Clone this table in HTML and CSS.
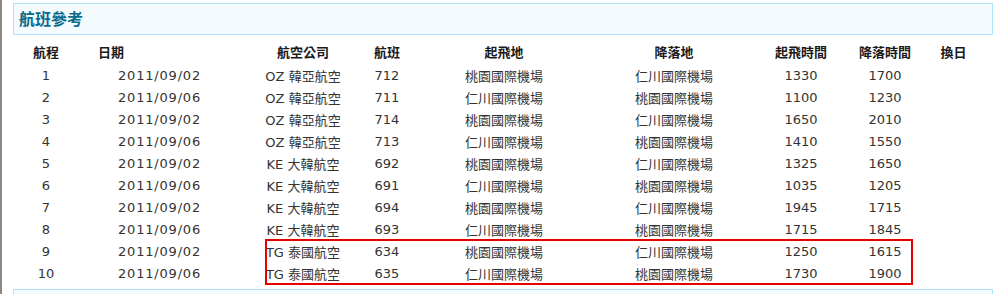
FILE: index.html
```html
<!DOCTYPE html>
<html lang="zh-Hant">
<head>
<meta charset="utf-8">
<title>航班參考</title>
<link rel="stylesheet" href="styles.css">
</head>
<body>
<div class="frame">
  <div class="panel-head">航班參考</div>
  <div class="table-wrap">
    <table class="flights">
      <colgroup>
        <col class="c1"><col class="c2"><col class="c3"><col class="c4"><col class="c5"><col class="c6"><col class="c7"><col class="c8"><col class="c9">
      </colgroup>
      <thead>
        <tr><th>航程</th><th class="th-date">日期</th><th>航空公司</th><th>航班</th><th>起飛地</th><th>降落地</th><th>起飛時間</th><th>降落時間</th><th>換日</th></tr>
      </thead>
      <tbody>
        <tr><td>1</td><td class="date">2011/09/02</td><td>OZ 韓亞航空</td><td>712</td><td>桃園國際機場</td><td>仁川國際機場</td><td>1330</td><td>1700</td><td></td></tr>
        <tr><td>2</td><td class="date">2011/09/06</td><td>OZ 韓亞航空</td><td>711</td><td>仁川國際機場</td><td>桃園國際機場</td><td>1100</td><td>1230</td><td></td></tr>
        <tr><td>3</td><td class="date">2011/09/02</td><td>OZ 韓亞航空</td><td>714</td><td>桃園國際機場</td><td>仁川國際機場</td><td>1650</td><td>2010</td><td></td></tr>
        <tr><td>4</td><td class="date">2011/09/06</td><td>OZ 韓亞航空</td><td>713</td><td>仁川國際機場</td><td>桃園國際機場</td><td>1410</td><td>1550</td><td></td></tr>
        <tr><td>5</td><td class="date">2011/09/02</td><td>KE 大韓航空</td><td>692</td><td>桃園國際機場</td><td>仁川國際機場</td><td>1325</td><td>1650</td><td></td></tr>
        <tr><td>6</td><td class="date">2011/09/06</td><td>KE 大韓航空</td><td>691</td><td>仁川國際機場</td><td>桃園國際機場</td><td>1035</td><td>1205</td><td></td></tr>
        <tr><td>7</td><td class="date">2011/09/02</td><td>KE 大韓航空</td><td>694</td><td>桃園國際機場</td><td>仁川國際機場</td><td>1945</td><td>1715</td><td></td></tr>
        <tr><td>8</td><td class="date">2011/09/06</td><td>KE 大韓航空</td><td>693</td><td>仁川國際機場</td><td>桃園國際機場</td><td>1715</td><td>1845</td><td></td></tr>
        <tr><td>9</td><td class="date">2011/09/02</td><td>TG 泰國航空</td><td>634</td><td>桃園國際機場</td><td>仁川國際機場</td><td>1250</td><td>1615</td><td></td></tr>
        <tr><td>10</td><td class="date">2011/09/06</td><td>TG 泰國航空</td><td>635</td><td>仁川國際機場</td><td>桃園國際機場</td><td>1730</td><td>1900</td><td></td></tr>
      </tbody>
    </table>
    <div class="highlight"></div>
  </div>
  <div class="panel-foot"></div>
</div>
</body>
</html>
```

FILE: styles.css
```css
html, body {
  margin: 0;
  padding: 0;
  background: #ffffff;
}
body {
  font-family: "DejaVu Sans", "Noto Sans CJK TC", sans-serif;
  font-size: 13px;
  color: #333333;
  overflow: hidden;
}
.frame {
  border-left: 2px solid #8a8a82;
  padding: 3px 0 0 11px;
  height: 291px;
  width: 980px;
  box-sizing: content-box;
  overflow: hidden;
}
.panel-head {
  box-sizing: border-box;
  width: 980px;
  height: 32px;
  border: 1px solid #aee4fb;
  background: #f3fbff;
  color: #0a6b8d;
  font-family: "Noto Sans CJK TC", sans-serif;
  font-weight: bold;
  font-size: 16px;
  line-height: 28px;
  padding-left: 5px;
}
.table-wrap {
  position: relative;
  margin-top: 3px;
}
.flights {
  table-layout: fixed;
  border-collapse: collapse;
  width: 978px;
}
.c1 { width: 66px; }
.c2 { width: 161px; }
.c3 { width: 126px; }
.c4 { width: 42px; }
.c5 { width: 192px; }
.c6 { width: 148px; }
.c7 { width: 106px; }
.c8 { width: 62px; }
.c9 { width: 75px; }
.flights th {
  height: 26px;
  padding: 0;
  text-align: center;
  font-family: "Noto Sans CJK TC", sans-serif;
  font-weight: bold;
  font-size: 13px;
  color: #1a1a1a;
  white-space: nowrap;
}
.flights th.th-date {
  text-align: left;
  padding-left: 19px;
}
.flights td {
  height: 22px;
  padding: 0;
  text-align: center;
  white-space: nowrap;
  color: #333333;
}
.flights td.date {
  letter-spacing: 0.8px;
}
.highlight {
  position: absolute;
  left: 252px;
  top: 201px;
  width: 648px;
  height: 46px;
  box-sizing: border-box;
  border: 2px solid #e60000;
  pointer-events: none;
}
.panel-foot {
  box-sizing: border-box;
  width: 980px;
  height: 30px;
  margin-top: 5px;
  border: 1px solid #aee4fb;
  background: #f3fbff;
}
```
